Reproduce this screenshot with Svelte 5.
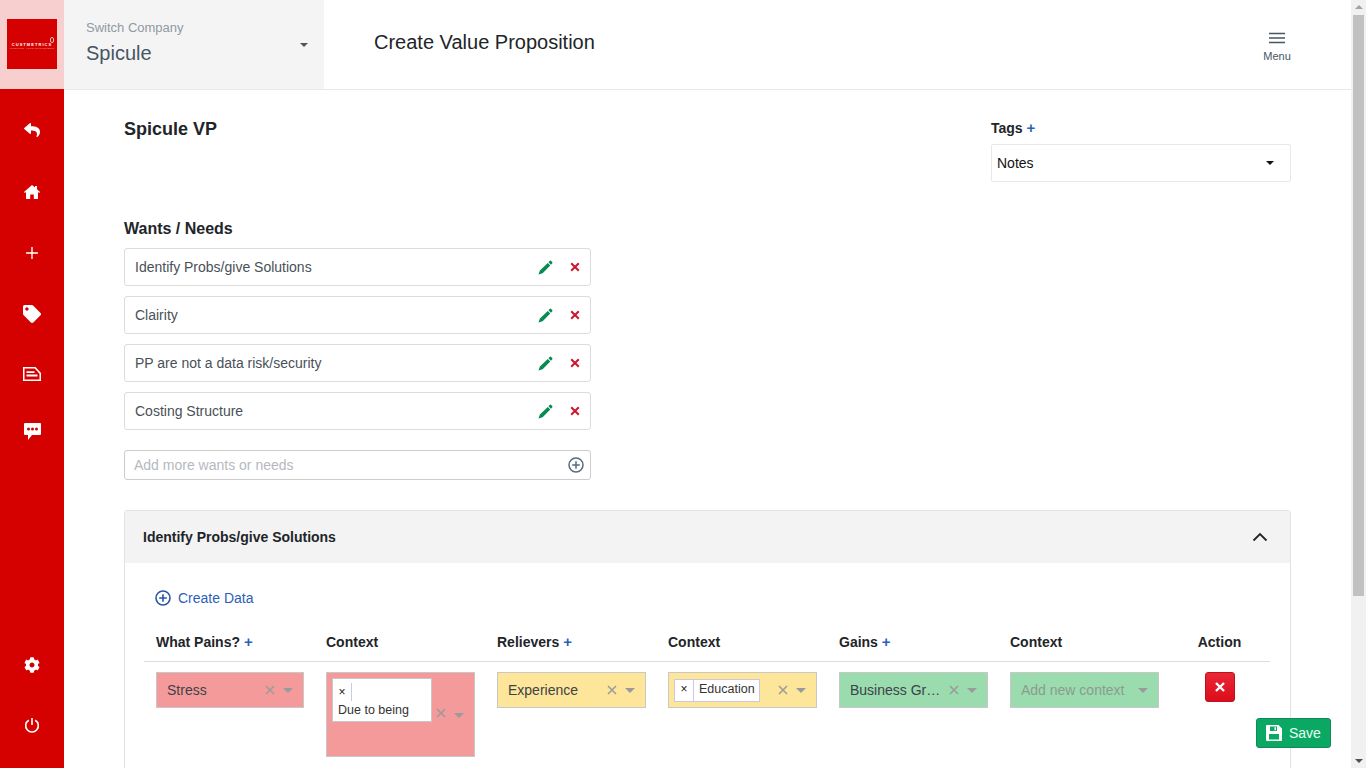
<script>
    const wants = [
        'Identify Probs/give Solutions',
        'Clairity',
        'PP are not a data risk/security',
        'Costing Structure'
    ]

    const columns = [
        { label: 'What Pains?', plus: true },
        { label: 'Context' },
        { label: 'Relievers', plus: true },
        { label: 'Context' },
        { label: 'Gains', plus: true },
        { label: 'Context' }
    ]
</script>

{#snippet clear()}
    <svg class="clear" viewBox="0 0 10 10" width="10" height="10"><path d="M1 1l8 8M9 1l-8 8" /></svg>
{/snippet}

{#snippet caret()}
    <span class="caret"></span>
{/snippet}

<div class="app">
    <div class="frame">
        <header class="topbar">
            <div class="brand">
                <div class="logo">
                    <span class="logo-pin"></span>
                    <span class="logo-name">CUSTMETRICS</span>
                    <span class="logo-sub">KNOWING YOUR CUSTOMERS</span>
                </div>
            </div>
            <div class="switcher">
                <div>
                    <div class="switch-label">Switch Company</div>
                    <div class="switch-name">Spicule</div>
                </div>
                <span class="switch-caret"></span>
            </div>
            <h1 class="page-title">Create Value Proposition</h1>
            <div class="menu">
                <svg viewBox="0 0 16 12" width="16" height="12"><path d="M0 1.500h16M0 6h16M0 10.500h16" /></svg>
                <span>Menu</span>
            </div>
        </header>

        <div class="body">
            <nav class="side">
                <svg class="i-reply" viewBox="0 0 512 512" width="16" height="16"><path d="M8.309 189.836L184.313 37.851C199.719 24.546 224 35.347 224 56.015v80.053c160.629 1.839 288 34.032 288 186.258 0 61.441-39.581 122.309-83.333 154.132-13.653 9.931-33.111-2.533-28.077-18.631 45.344-145.012-21.507-183.51-176.59-185.742V360c0 20.7-24.3 31.453-39.687 18.164l-176.004-152c-11.071-9.562-11.086-26.753 0-36.328z" /></svg>
                <svg class="i-home" viewBox="0 0 16 14" width="16" height="14"><path d="M8 0l3 2.600V1h2v3.300L16 7l-.8.900L14 6.900V14H9.800V9.500H6.200V14H2V6.900L.8 7.900 0 7z" /></svg>
                <svg class="i-plus" viewBox="0 0 12 12" width="12" height="12"><path d="M5.300 0h1.400v5.300H12v1.400H6.700V12H5.300V6.700H0V5.300h5.300z" /></svg>
                <svg class="i-tag" viewBox="0 0 512 512" width="18" height="18"><path d="M0 252.118V48C0 21.49 21.49 0 48 0h204.118a48 48 0 0 1 33.941 14.059l211.882 211.882c18.745 18.745 18.745 49.137 0 67.882L293.823 497.941c-18.745 18.745-49.137 18.745-67.882 0L14.059 286.059A48 48 0 0 1 0 252.118zM112 64c-26.51 0-48 21.49-48 48s21.49 48 48 48 48-21.490 48-48-21.490-48-48-48z" /></svg>
                <svg class="i-notes" viewBox="0 0 18 14" width="18" height="14"><path fill-rule="evenodd" d="M0 0h12.500L18 6v8H0zM1.500 1.500v11h15V6.800L11.800 1.500zM3.500 4.200h8v1.800h-8zM3.500 7.600h11v1.800h-11z" /></svg>
                <svg class="i-chat" viewBox="0 0 17 17" width="17" height="17"><path fill-rule="evenodd" d="M1 0h15a1 1 0 0 1 1 1v10a1 1 0 0 1-1 1H8l-4 5v-5H1a1 1 0 0 1-1-1V1a1 1 0 0 1 1-1zM4.500 4.500a1.500 1.500 0 1 0 0 3 1.500 1.500 0 0 0 0-3zM8.500 4.500a1.500 1.500 0 1 0 0 3 1.500 1.500 0 0 0 0-3zM12.500 4.500a1.500 1.500 0 1 0 0 3 1.500 1.500 0 0 0 0-3z" /></svg>
                <svg class="i-gear" viewBox="0 0 512 512" width="16" height="16"><path d="M487.4 315.7l-42.6-24.6c4.3-23.2 4.3-47 0-70.2l42.6-24.6c4.9-2.8 7.1-8.6 5.5-14-11.1-35.6-30-67.8-54.7-94.6-3.8-4.1-10-5.1-14.8-2.3L380.8 110c-17.9-15.4-38.5-27.3-60.8-35.1V25.8c0-5.6-3.9-10.5-9.4-11.7-36.7-8.2-74.3-7.8-109.2 0-5.5 1.2-9.4 6.1-9.4 11.7V75c-22.2 7.9-42.8 19.8-60.8 35.1L88.7 85.500c-4.9-2.8-11-1.9-14.8 2.3-24.7 26.7-43.6 58.9-54.7 94.6-1.7 5.4.6 11.2 5.500 14L67.3 221c-4.3 23.2-4.3 47 0 70.2l-42.6 24.6c-4.9 2.8-7.1 8.6-5.5 14 11.1 35.6 30 67.8 54.7 94.6 3.8 4.1 10 5.1 14.8 2.3l42.6-24.6c17.9 15.4 38.5 27.3 60.8 35.1v49.2c0 5.6 3.9 10.5 9.4 11.7 36.7 8.2 74.3 7.8 109.2 0 5.5-1.2 9.4-6.1 9.4-11.7v-49.2c22.2-7.9 42.8-19.8 60.8-35.1l42.6 24.6c4.9 2.8 11 1.9 14.8-2.3 24.7-26.7 43.6-58.9 54.7-94.6 1.5-5.5-.7-11.3-5.6-14.1zM256 336c-44.1 0-80-35.9-80-80s35.9-80 80-80 80 35.9 80 80-35.9 80-80 80z" /></svg>
                <svg class="i-power" viewBox="0 0 16 16" width="16" height="16"><path d="M8 1v7M4.800 3.200a6.300 6.300 0 1 0 6.400 0" /></svg>
            </nav>

            <main class="main">
                <div class="head">
                    <h2 class="vp-name">Spicule VP</h2>
                    <div class="tags">
                        <div class="tags-label">Tags <span class="plus">+</span></div>
                        <div class="tags-select">
                            <span>Notes</span>
                            <span class="tags-caret"></span>
                        </div>
                    </div>
                </div>

                <section class="wants">
                    <h3>Wants / Needs</h3>
                    {#each wants as want}
                        <div class="want">
                            <span>{want}</span>
                            <svg class="pencil" viewBox="0 0 16 16" width="15" height="15"><path d="M12.400 1a1.200 1.200 0 0 1 1.700 0l1 1a1.200 1.200 0 0 1 0 1.700l-1.300 1.300-2.700-2.700zM10.400 3.100l2.700 2.700-8.200 8.200L.5 15.500 2 11.300z" /></svg>
                            <svg class="cross" viewBox="0 0 10 10" width="10" height="10"><path d="M1.200 1.200l7.600 7.600M8.800 1.200L1.200 8.800" /></svg>
                        </div>
                    {/each}
                    <div class="add-want">
                        <input type="text" placeholder="Add more wants or needs" />
                        <svg viewBox="0 0 16 16" width="16" height="16"><circle cx="8" cy="8" r="7" /><path d="M8 4.200v7.600M4.200 8h7.600" /></svg>
                    </div>
                </section>

                <section class="panel">
                    <div class="panel-head">
                        <span>Identify Probs/give Solutions</span>
                        <svg viewBox="0 0 16 10" width="16" height="10"><path d="M1.500 8.500L8 2l6.500 6.500" /></svg>
                    </div>
                    <div class="panel-body">
                        <div class="create">
                            <svg viewBox="0 0 16 16" width="16" height="16"><circle cx="8" cy="8" r="7" /><path d="M8 4.200v7.600M4.200 8h7.600" /></svg>
                            <span>Create Data</span>
                        </div>

                        <div class="grid grid-head">
                            {#each columns as col}
                                <div class="col-title">{col.label}{#if col.plus}&nbsp;<span class="plus">+</span>{/if}</div>
                            {/each}
                            <div class="col-action">Action</div>
                        </div>

                        <div class="grid grid-row">
                            <div class="cell">
                                <div class="pick pink narrow">
                                    <span class="value">Stress</span>
                                    {@render clear()}
                                    {@render caret()}
                                </div>
                            </div>
                            <div class="cell">
                                <div class="pick pink tall">
                                    <div class="chip chip-wrap">
                                        <span class="chip-x">×</span>
                                        <span class="chip-text">Due to being</span>
                                    </div>
                                    {@render clear()}
                                    {@render caret()}
                                </div>
                            </div>
                            <div class="cell">
                                <div class="pick yellow">
                                    <span class="value">Experience</span>
                                    {@render clear()}
                                    {@render caret()}
                                </div>
                            </div>
                            <div class="cell">
                                <div class="pick yellow multi">
                                    <div class="chip">
                                        <span class="chip-x">×</span>
                                        <span class="chip-text">Education</span>
                                    </div>
                                    <span class="spacer"></span>
                                    {@render clear()}
                                    {@render caret()}
                                </div>
                            </div>
                            <div class="cell">
                                <div class="pick green">
                                    <span class="value">Business Gr…</span>
                                    {@render clear()}
                                    {@render caret()}
                                </div>
                            </div>
                            <div class="cell">
                                <div class="pick green">
                                    <span class="value placeholder">Add new context</span>
                                    {@render caret()}
                                </div>
                            </div>
                            <div class="cell-action">
                                <button class="del" type="button" aria-label="Delete">
                                    <svg viewBox="0 0 12 12" width="12" height="12"><path d="M2 2l8 8M10 2l-8 8" /></svg>
                                </button>
                            </div>
                        </div>
                    </div>
                </section>

                <button class="save" type="button">
                    <svg viewBox="0 0 16 16" width="16" height="16"><path fill-rule="evenodd" d="M1 0h11.500L16 3.500V15a1 1 0 0 1-1 1H1a1 1 0 0 1-1-1V1a1 1 0 0 1 1-1zM4 1.500V6h7V1.500zM8.500 2.300h1.500v3H8.500zM3 9v5.500h10V9z" /></svg>
                    <span>Save</span>
                </button>
            </main>
        </div>
    </div>

    <div class="scrollbar">
        <span class="arrow up"></span>
        <div class="track"><div class="thumb"></div></div>
        <span class="arrow down"></span>
    </div>
</div>

<style>
    :global(body) {
        margin: 0;
        font-family: "Liberation Sans", Arial, sans-serif;
        color: #212529;
        background: #fff;
    }

    .app {
        display: flex;
        height: 100vh;
        overflow: hidden;
    }

    .frame {
        flex: 1;
        min-width: 0;
        display: flex;
        flex-direction: column;
    }

    /* top bar */
    .topbar {
        display: flex;
        align-items: stretch;
        height: 89px;
        flex: none;
        border-bottom: 1px solid #e8e8e8;
    }

    .brand {
        width: 64px;
        background: #f7cfcf;
        display: flex;
        align-items: center;
        justify-content: center;
    }

    .logo {
        position: relative;
        width: 50px;
        height: 50px;
        margin-top: -1px;
        padding-top: 5px;
        box-sizing: border-box;
        background: #d50000;
        display: flex;
        flex-direction: column;
        align-items: center;
        justify-content: center;
        color: #fff;
        line-height: 1;
    }

    .logo-name {
        font-size: 4px;
        font-weight: 700;
        letter-spacing: 1.05px;
    }

    .logo-sub {
        font-size: 2.500px;
        letter-spacing: 0.35px;
        margin-top: 1px;
        color: #f7a5a5;
    }

    .logo-pin {
        position: absolute;
        top: 18px;
        right: 3px;
        width: 2px;
        height: 4px;
        border: 1px solid #f7b5b5;
        border-radius: 2px;
    }

    .switcher {
        width: 260px;
        background: #f4f4f4;
        display: flex;
        align-items: center;
        justify-content: space-between;
        padding: 0 16px 0 22px;
        box-sizing: border-box;
    }

    .switch-label {
        font-size: 13px;
        color: #8f9aa5;
        margin-top: -5px;
    }

    .switch-name {
        font-size: 20px;
        color: #465664;
        margin-top: 7px;
    }

    .switch-caret {
        width: 0;
        height: 0;
        border-left: 4px solid transparent;
        border-right: 4px solid transparent;
        border-top: 4px solid #465664;
    }

    .page-title {
        flex: 1;
        margin: 0 0 0 50px;
        font-size: 20px;
        font-weight: 400;
        line-height: 84px;
        color: #212529;
    }

    .menu {
        width: 74px;
        margin-right: 37px;
        display: flex;
        flex-direction: column;
        align-items: center;
        justify-content: center;
        gap: 6px;
        font-size: 11px;
        color: #465664;
        padding-top: 4px;
    }

    .menu svg {
        stroke: #465664;
        stroke-width: 1.500;
    }

    /* sidebar + content */
    .body {
        flex: 1;
        min-height: 0;
        display: flex;
        margin-top: -1px;
    }

    .side {
        width: 64px;
        flex: none;
        background: #d50000;
        display: flex;
        flex-direction: column;
        align-items: center;
        fill: #fff;
    }

    .i-reply { margin-top: 33px; }
    .i-home { margin-top: 47px; }
    .i-plus { margin-top: 48px; }
    .i-tag { margin-top: 46px; }
    .i-notes { margin-top: 44px; }
    .i-chat { margin-top: 42px; }
    .i-gear { margin-top: auto; }

    .i-power {
        margin-top: 44px;
        margin-bottom: 35px;
        fill: none;
        stroke: #fff;
        stroke-width: 1.600;
    }

    .main {
        flex: 1;
        min-width: 0;
        padding: 29px 60px 0;
        overflow: hidden;
        margin-top: 1px;
    }

    .head {
        display: flex;
        justify-content: space-between;
        align-items: flex-start;
    }

    .vp-name {
        margin: -1px 0 0;
        font-size: 18px;
        line-height: 22px;
        font-weight: 700;
    }

    .tags {
        width: 300px;
    }

    .tags-label {
        font-size: 14px;
        font-weight: 700;
        line-height: 18px;
        margin-bottom: 7px;
    }

    .plus {
        color: #2b5fb8;
        font-weight: 700;
        font-size: 15px;
        line-height: 15px;
    }

    .tags-select {
        height: 38px;
        box-sizing: border-box;
        border: 1px solid #e8e8e8;
        border-radius: 2px;
        display: flex;
        align-items: center;
        justify-content: space-between;
        padding: 0 16px 0 5px;
        font-size: 14px;
        color: #111;
    }

    .tags-caret {
        width: 0;
        height: 0;
        border-left: 4px solid transparent;
        border-right: 4px solid transparent;
        border-top: 4px solid #111;
    }

    .wants {
        width: 467px;
        margin-top: 37px;
    }

    .wants h3 {
        margin: 0 0 9px;
        font-size: 16px;
        line-height: 20px;
        font-weight: 700;
    }

    .want {
        height: 38px;
        box-sizing: border-box;
        margin-bottom: 10px;
        border: 1px solid #dcdcdc;
        border-radius: 3px;
        display: flex;
        align-items: center;
        padding: 0 10px;
        font-size: 14px;
        color: #495057;
    }

    .want span {
        flex: 1;
    }

    .pencil {
        fill: #0b8a52;
        margin-right: 17px;
    }

    .cross {
        stroke: #d0142c;
        stroke-width: 2;
        fill: none;
    }

    .add-want {
        height: 30px;
        box-sizing: border-box;
        margin-top: 20px;
        border: 1px solid #ccc;
        border-radius: 3px;
        display: flex;
        align-items: center;
        padding-right: 6px;
    }

    .add-want input {
        flex: 1;
        min-width: 0;
        border: 0;
        outline: 0;
        background: none;
        padding: 0 9px;
        font: 14px "Liberation Sans", Arial, sans-serif;
    }

    .add-want input::placeholder {
        color: #b5b9bf;
        opacity: 1;
    }

    .add-want svg {
        fill: none;
        stroke: #5b6b80;
        stroke-width: 1.500;
    }

    .panel {
        margin-top: 30px;
        border: 1px solid #e2e2e2;
        border-radius: 3px 3px 0 0;
    }

    .panel-head {
        height: 52px;
        background: #f3f3f3;
        display: flex;
        align-items: center;
        justify-content: space-between;
        padding: 0 22px 0 18px;
        font-size: 14px;
        font-weight: 700;
    }

    .panel-head svg {
        fill: none;
        stroke: #212529;
        stroke-width: 1.800;
    }

    .panel-body {
        padding: 26px 20px 12px 19px;
    }

    .create {
        display: flex;
        align-items: center;
        gap: 7px;
        margin-left: 11px;
        height: 18px;
        font-size: 14px;
        color: #2b5fb8;
    }

    .create svg {
        fill: none;
        stroke: #2b55a8;
        stroke-width: 1.600;
    }

    .grid {
        display: grid;
        grid-template-columns: 170px repeat(5, 171px) 1fr;
    }

    .grid-head {
        margin-top: 26px;
        padding-bottom: 10px;
        border-bottom: 1px solid #dcdcdc;
        font-size: 14px;
        line-height: 18px;
        font-weight: 700;
    }

    .col-title {
        padding-left: 12px;
    }

    .col-action {
        text-align: center;
    }

    .grid-row {
        padding-top: 10px;
    }

    .cell {
        padding-left: 12px;
    }

    .pick {
        width: 149px;
        min-height: 36px;
        box-sizing: border-box;
        border: 1px solid #c8c8c8;
        display: flex;
        align-items: center;
        padding: 0 10px;
        font-size: 14px;
        color: #3d4247;
    }

    .narrow { width: 148px; }
    .pink { background: #f49a9a; }
    .yellow { background: #fde69a; }
    .green { background: #9adcae; }

    .tall {
        height: 85px;
        align-items: flex-start;
        padding: 5px 9px 0 5px;
    }

    .tall :global(.clear) {
        margin: 30px 0 0 4px;
    }

    .tall :global(.caret) {
        margin-top: 35px;
    }

    .multi {
        padding-left: 5px;
    }

    .value {
        flex: 1;
        min-width: 0;
        white-space: nowrap;
    }

    .placeholder {
        color: #8e9a91;
    }

    .spacer {
        flex: 1;
    }

    .clear {
        stroke: #9a9a9a;
        stroke-width: 1.500;
        fill: none;
        flex: none;
    }

    .caret {
        flex: none;
        margin-left: 8px;
        width: 0;
        height: 0;
        border-left: 5px solid transparent;
        border-right: 5px solid transparent;
        border-top: 5px solid #9a9a9a;
    }

    .chip {
        background: #fff;
        border: 1px solid #c8c8e0;
        display: flex;
        align-items: stretch;
        font-size: 12.500px;
        color: #333;
        height: 23px;
        box-sizing: border-box;
    }

    .chip-x {
        width: 18px;
        flex: none;
        text-align: center;
        font-size: 12px;
        line-height: 18px;
        color: #222;
        border-right: 1px solid #c8c8f0;
    }

    .chip-text {
        padding: 0 4px 0 5px;
        line-height: 18px;
        white-space: nowrap;
    }

    .chip-wrap {
        width: 100px;
        height: 44px;
        flex: none;
        flex-wrap: wrap;
        align-items: flex-start;
        align-content: flex-start;
        padding-top: 4px;
        border-color: #c8c8c8;
    }

    .chip-wrap .chip-x {
        height: 18px;
    }

    .chip-wrap .chip-text {
        width: 100%;
        margin-top: 0;
    }

    .cell-action {
        text-align: center;
    }

    .del {
        width: 30px;
        height: 30px;
        padding: 0;
        border: 1px solid #b8141f;
        border-radius: 3px;
        background: linear-gradient(#ea2636, #dc0d1a);
        display: inline-flex;
        align-items: center;
        justify-content: center;
    }

    .del svg {
        stroke: #fff;
        stroke-width: 2.400;
        fill: none;
    }

    .save {
        position: fixed;
        left: 1256px;
        top: 718px;
        width: 75px;
        height: 30px;
        padding: 0 0 0 9px;
        border: 1px solid #0f8a58;
        border-radius: 3px;
        background: #0aa863;
        color: #e8fff4;
        display: flex;
        align-items: center;
        gap: 7px;
        font: 14px "Liberation Sans", Arial, sans-serif;
    }

    .save svg {
        fill: #fff;
    }

    /* scrollbar */
    .scrollbar {
        width: 15px;
        flex: none;
        background: #f1f1f1;
        display: flex;
        flex-direction: column;
        align-items: center;
    }

    .arrow {
        flex: none;
        width: 0;
        height: 0;
        border-left: 4px solid transparent;
        border-right: 4px solid transparent;
    }

    .arrow.up {
        margin: 5px 0 6px;
        border-bottom: 4px solid #a3a3a3;
    }

    .arrow.down {
        margin: 6px 0 5px;
        border-top: 4px solid #505050;
    }

    .track {
        flex: 1;
        width: 100%;
        display: flex;
        justify-content: center;
    }

    .thumb {
        width: 11px;
        height: 581px;
        background: #c1c1c1;
    }
</style>
